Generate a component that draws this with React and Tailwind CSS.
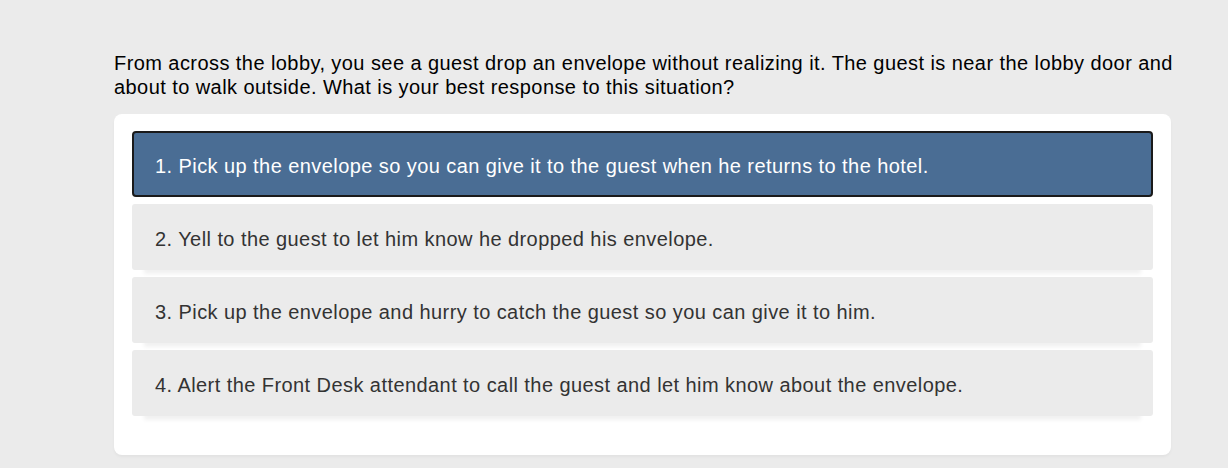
import React from "react";

const options = [
  "1. Pick up the envelope so you can give it to the guest when he returns to the hotel.",
  "2. Yell to the guest to let him know he dropped his envelope.",
  "3. Pick up the envelope and hurry to catch the guest so you can give it to him.",
  "4. Alert the Front Desk attendant to call the guest and let him know about the envelope.",
];

export default function App() {
  const selected = 0;
  return (
    <div className="min-h-screen w-full bg-[#ebebeb] font-['Liberation_Sans',Arial,sans-serif] tracking-[0.43px]">
      <div className="pl-[114px] pr-[50px] pt-[51px]">
        {/* Question */}
        <p className="text-[20px] leading-[24px] text-black">
          From across the lobby, you see a guest drop an envelope without realizing it. The guest is near the lobby door and about to walk outside. What is your best response to this situation?
        </p>

        {/* Answer card */}
        <div className="mt-[15px] mr-[7px] bg-white rounded-[8px] pt-[17px] px-[18px] pb-[39px] shadow-[0_2px_3px_rgba(0,0,0,0.04)]">
          <div className="flex flex-col gap-[7px]">
            {options.map((text, i) => (
              <div
                key={i}
                className={
                  i === selected
                    ? "h-[66px] flex items-center pl-[21px] pt-[3px] rounded-[4px] border-2 border-[#1a1a1a] bg-[#4a6d94] text-white text-[20px]"
                    : "h-[66px] flex items-center pl-[21px] pt-[3px] rounded-[3px] border-2 border-transparent bg-[#ebebeb] text-[#333333] text-[20px] shadow-[0_16px_4px_-12px_rgba(0,0,0,0.06)]"
                }
              >
                {text}
              </div>
            ))}
          </div>
        </div>
      </div>
    </div>
  );
}
